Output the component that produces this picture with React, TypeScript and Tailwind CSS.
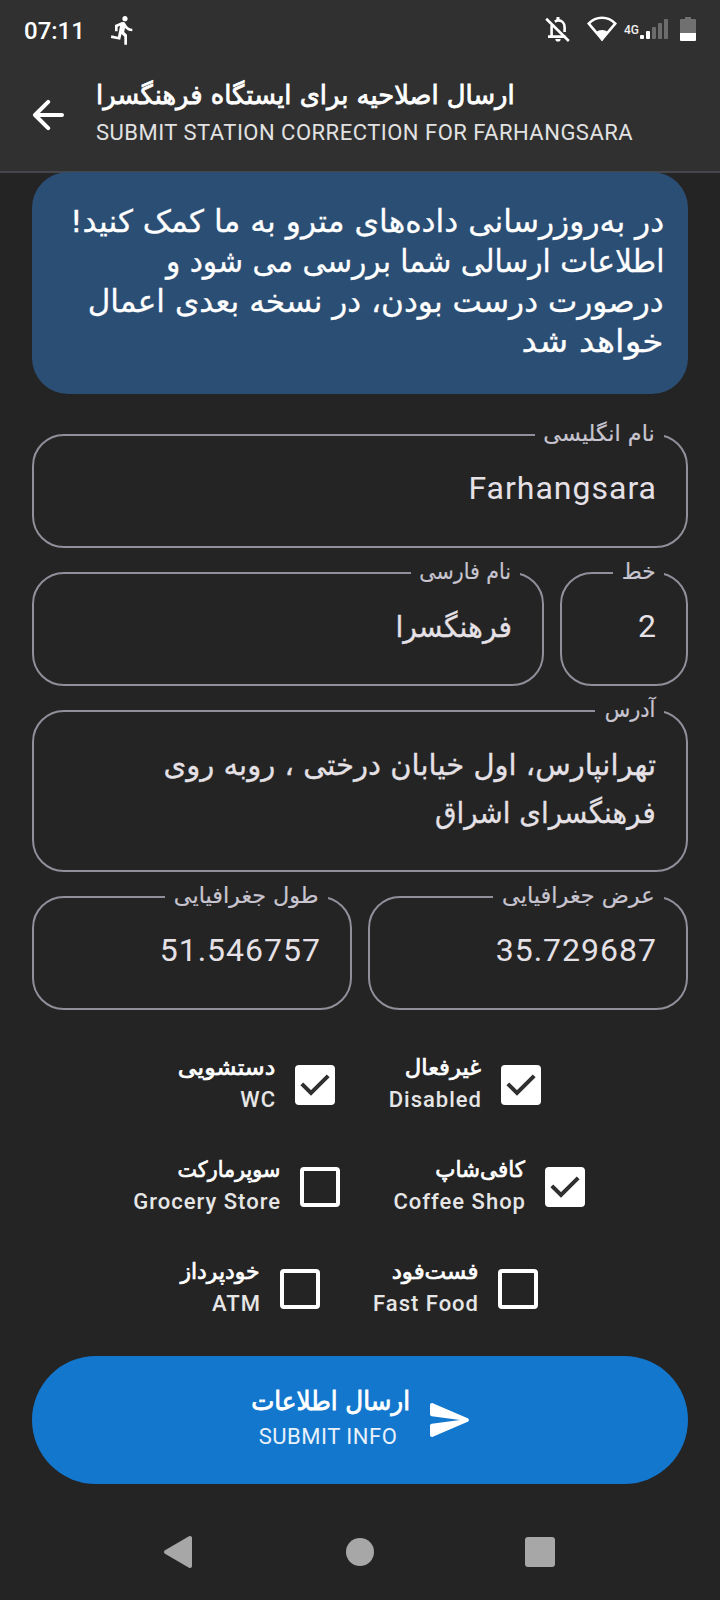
import type { ReactNode } from 'react';

function Fa({ children, className }: { children: ReactNode; className: string }) {
  return (
    <span
      dir="rtl"
      className={`inline-block whitespace-nowrap font-['DejaVu_Sans',sans-serif] ${className}`}
    >
      {children}
    </span>
  );
}

function StatusBar() {
  return (
    <div className="flex h-[60px] items-start text-white">
      <span className="ml-[24px] mt-[17px] w-[60px] text-[24px] font-medium leading-[28px]">07:11</span>
      <svg className="ml-[23px] mt-[14px] size-[32px]" viewBox="0 0 24 24" fill="currentColor">
        <path d="M13.49 5.48c1.1 0 2-.9 2-2s-.9-2-2-2-2 .9-2 2 .9 2 2 2zm-3.6 13.9l1-4.4 2.1 2v6h2v-7.5l-2.1-2 .6-3c1.3 1.5 3.3 2.5 5.5 2.5v-2c-1.9 0-3.5-1-4.3-2.4l-1-1.6c-.4-.6-1-1-1.7-1-.3 0-.5.1-.8.1l-5.2 2.2v4.7h2v-3.4l1.8-.7-1.6 8.1-4.9-1-.4 2 7 1.4z" />
      </svg>
      <svg className="ml-auto mt-[16px] h-[28px] w-[28px]" viewBox="0 0 28 28" fill="none" stroke="currentColor">
        <path d="M3 20.6H20.5M6.6 20V11c0-1.2.2-2.2.8-3.2M9.8 5.6C11 5 12 4.4 13 4.4c4 0 6.6 3 6.6 6.6v5" strokeWidth="2.6" />
        <path d="M13 1v4" strokeWidth="3" />
        <path d="M10.4 23h5.2a2.6 2.6 0 0 1-5.2 0z" fill="currentColor" stroke="none" />
        <path d="M1.2 2.8L23.8 25" strokeWidth="2.6" />
      </svg>
      <svg className="ml-[14px] mt-[16px] h-[26px] w-[30px]" viewBox="0 0 30 26">
        <path d="M1.7 7.6C5 4.2 9.7 1.8 15 1.8S25 4.2 28.3 7.6L15 23.2z" fill="none" stroke="currentColor" strokeWidth="2.6" />
        <path d="M9.2 16.4C10.6 14.8 12.6 14 15 14s4.400 .8 5.800 2.400L15 25.300z" fill="currentColor" />
      </svg>
      <span className="ml-[7px] mt-[22px] w-[15px] text-[12px] font-medium leading-[16px] text-[#f0f0f0]">4G</span>
      <svg className="ml-[1px] mt-[19px] h-[20px] w-[28px]" viewBox="0 0 28 20">
        <rect x="0" y="16" width="4" height="4" rx="1" fill="#fff" />
        <rect x="6" y="12" width="4" height="8" rx="1" fill="#fff" />
        <rect x="12" y="8" width="4" height="12" rx="1" fill="#6c6c6c" />
        <rect x="18" y="4" width="4" height="16" rx="1" fill="#6c6c6c" />
        <rect x="24" y="0" width="4" height="20" rx="1" fill="#6c6c6c" />
      </svg>
      <svg className="ml-[12px] mr-[24px] mt-[17px] h-[24px] w-[16px]" viewBox="0 0 16 24">
        <path d="M5 0h6v2h4a1 1 0 0 1 1 1v13H0V3a1 1 0 0 1 1-1h4z" fill="#707070" />
        <path d="M0 16h16v7a1 1 0 0 1-1 1H1a1 1 0 0 1-1-1z" fill="#fff" />
      </svg>
    </div>
  );
}

function Header() {
  return (
    <header className="h-[173px] border-b-2 border-[#47454c] bg-[#303030]">
      <StatusBar />
      <div className="flex pl-[32px]">
        <svg className="mt-[39px] size-[32px]" viewBox="0 0 32 32" fill="none" stroke="#fff" strokeWidth="4" strokeLinecap="round" strokeLinejoin="round">
          <path d="M30 16H3M16.200 2.800L3 16l13.200 13.200" />
        </svg>
        <div className="ml-[32px] mt-[16px] flex flex-col items-start">
          <Fa className="origin-left scale-x-[0.977] text-[26.4px] leading-[38px] text-white [-webkit-text-stroke:0.8px]">
            ارسال اصلاحیه برای ایستگاه فرهنگسرا
          </Fa>
          <span className="mt-[5px] whitespace-nowrap text-[22px] leading-[28px] tracking-[0.49px] text-[#e2e2e2]">
            SUBMIT STATION CORRECTION FOR FARHANGSARA
          </span>
        </div>
      </div>
    </header>
  );
}

function Notice() {
  return (
    <div className="flex h-[222px] flex-col items-end rounded-[36px] bg-[#2b4e75] pr-[24px] pt-[29px] text-[31px] leading-[40px] text-white [-webkit-text-stroke:0.3px]">
      <Fa className="origin-right scale-x-[1.012]">در به‌روزرسانی داده‌های مترو به ما کمک کنید!</Fa>
      <Fa className="origin-right scale-x-[0.956]">اطلاعات ارسالی شما بررسی می شود و</Fa>
      <Fa className="origin-right scale-x-[1.004]">درصورت درست بودن، در نسخه بعدی اعمال</Fa>
      <Fa className="origin-right scale-x-[1.105]">خواهد شد</Fa>
    </div>
  );
}

type FieldProps = { label: string; labelClass: string; notch: string; box: string; children: ReactNode };

function Field({ label, labelClass, notch, box, children }: FieldProps) {
  return (
    <div className={`relative rounded-[32px] border-2 border-[#918f9a] text-[#e5e1e6] ${box}`}>
      <div className={`absolute right-[22px] top-[-17px] flex h-[32px] justify-end bg-[#242424] pr-[9px] ${notch}`}>
        <Fa className={`origin-right text-[22px] leading-[30px] text-[#c8c5d0] [-webkit-text-stroke:0.2px] ${labelClass}`}>{label}</Fa>
      </div>
      <div className="flex flex-col items-end pr-[29px] pt-[28px] text-[32px] leading-[48px] tracking-[1px]">{children}</div>
    </div>
  );
}

function FaValue({ children, className }: { children: ReactNode; className: string }) {
  return (
    <Fa className={`relative top-px mr-px origin-right text-[29.5px] tracking-normal [-webkit-text-stroke:0.3px] ${className}`}>
      {children}
    </Fa>
  );
}

type OptionProps = { fa: string; en: string; faClass: string; width: string; checked?: boolean };

function Option({ fa, en, faClass, width, checked }: OptionProps) {
  return (
    <div className="flex items-center gap-[20px]">
      <div className={`flex flex-col items-end ${width}`}>
        <Fa className={`origin-right text-[22px] leading-[32px] text-white [-webkit-text-stroke:0.7px] ${faClass}`}>{fa}</Fa>
        <span className="mr-[-1px] whitespace-nowrap text-[22px] font-medium leading-[32px] tracking-[1px] text-[#e6e6e6]">{en}</span>
      </div>
      {checked ? (
        <svg className="mt-[2px] size-[40px] rounded-[4px] bg-white" viewBox="0 0 40 40" fill="none" stroke="#303030" strokeWidth="4">
          <path d="M6.800 18.800L16 28 33.200 10.800" />
        </svg>
      ) : (
        <div className="mt-[2px] size-[40px] rounded-[4px] border-4 border-white" />
      )}
    </div>
  );
}

export default function App() {
  return (
    <div className="flex h-[1600px] w-[720px] flex-col overflow-hidden bg-[#242424] font-['Roboto',sans-serif]">
      <Header />
      <main className="mt-[-1px] flex flex-col px-[32px]">
        <Notice />
        <div className="mt-[40px] flex flex-col gap-[24px]">
          <Field label="نام انگلیسی" labelClass="scale-x-[1.015]" notch="w-[129px]" box="h-[114px]">
            <span>Farhangsara</span>
          </Field>
          <div className="flex gap-[16px]">
            <Field label="نام فارسی" labelClass="scale-x-[0.935]" notch="w-[109px]" box="h-[114px] flex-1">
              <FaValue className="scale-x-[0.955]">فرهنگسرا</FaValue>
            </Field>
            <Field label="خط" labelClass="scale-x-[0.98]" notch="w-[51px]" box="h-[114px] w-[128px]">
              <span>2</span>
            </Field>
          </div>
          <Field label="آدرس" labelClass="scale-x-[0.95]" notch="w-[69px]" box="h-[162px]">
            <FaValue className="scale-x-[0.985]">تهرانپارس، اول خیابان درختی ، روبه روی</FaValue>
            <FaValue className="scale-x-[0.94]">فرهنگسرای اشراق</FaValue>
          </Field>
          <div className="flex gap-[16px]">
            <Field label="طول جغرافیایی" labelClass="scale-x-[1.015]" notch="w-[163px]" box="h-[114px] flex-1">
              <span>51.546757</span>
            </Field>
            <Field label="عرض جغرافیایی" labelClass="scale-x-[1.02]" notch="w-[171px]" box="h-[114px] flex-1">
              <span>35.729687</span>
            </Field>
          </div>
        </div>
        <div className="mt-[42px] flex flex-col gap-[38px]">
          <div className="flex justify-center gap-[54px] pr-px">
            <Option fa="دستشویی" en="WC" faClass="scale-x-[1.08]" width="w-[97px]" checked />
            <Option fa="غیرفعال" en="Disabled" faClass="scale-x-[1.03]" width="w-[92px]" checked />
          </div>
          <div className="flex justify-center gap-[54px] pr-[2px]">
            <Option fa="سوپرمارکت" en="Grocery Store" faClass="scale-x-[0.94]" width="w-[147px]" />
            <Option fa="کافی‌شاپ" en="Coffee Shop" faClass="scale-x-[0.975]" width="w-[131px]" checked />
          </div>
          <div className="flex justify-center gap-[54px] pr-[3px]">
            <Option fa="خودپرداز" en="ATM" faClass="scale-x-[0.995]" width="w-[81px]" />
            <Option fa="فست‌فود" en="Fast Food" faClass="scale-x-[1.04]" width="w-[104px]" />
          </div>
        </div>
        <button className="mt-[36px] flex h-[128px] items-center justify-center gap-[16px] rounded-full bg-[#1277cd] pr-[4px] text-white">
          <span className="flex flex-col items-center pb-[2px]">
            <Fa className="origin-right scale-x-[0.945] text-[26px] leading-[36px] [-webkit-text-stroke:0.8px]">ارسال اطلاعات</Fa>
            <span className="ml-[4px] text-[22px] leading-[36px] tracking-[0.5px] text-[#e8f1fa]">SUBMIT INFO</span>
          </span>
          <svg className="size-[48px]" viewBox="0 0 24 24" fill="currentColor">
            <path d="M3.400 20.400l17.450-7.480c.81-.35.81-1.490 0-1.840L3.400 3.600c-.66-.29-1.390.2-1.390.91L2 9.120c0 .5.37.93.87.99L17 12 2.870 13.880c-.5.070-.87.5-.87 1l.01 4.610c0 .71.73 1.200 1.390.91z" />
          </svg>
        </button>
      </main>
      <nav className="mt-[50px] flex h-[36px] items-center pl-[162px] text-[#a7a7a7]">
        <svg className="h-[34px] w-[32px]" viewBox="0 0 32 34" fill="currentColor" stroke="currentColor" strokeWidth="4" strokeLinejoin="round">
          <path d="M4 17L28 3v28z" />
        </svg>
        <div className="ml-[152px] size-[28px] rounded-full bg-[#a7a7a7]" />
        <div className="ml-[151px] size-[30px] rounded-[3px] bg-[#a7a7a7]" />
      </nav>
    </div>
  );
}
